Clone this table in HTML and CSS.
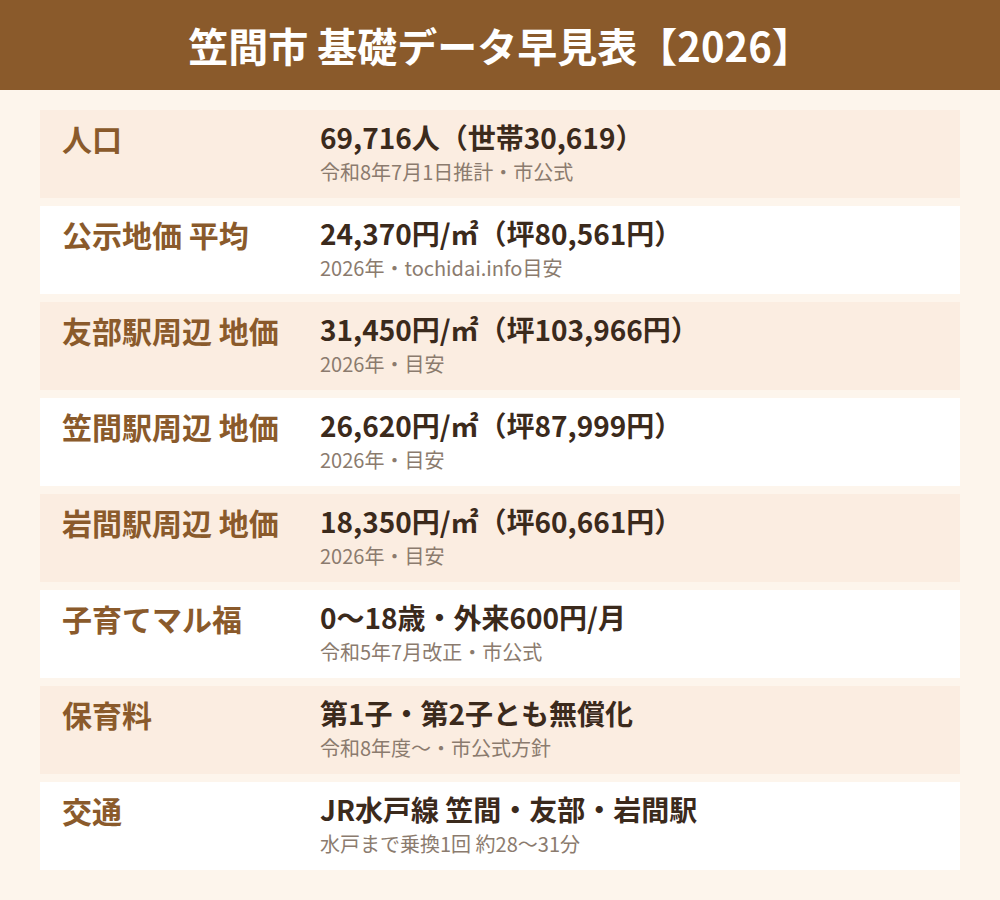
FILE: index.html
```html
<!DOCTYPE html>
<html lang="ja">
<head>
<meta charset="utf-8">
<title>笠間市 基礎データ早見表【2026】</title>
<link rel="stylesheet" href="styles.css">
</head>
<body>
<header class="header"><h1 class="title">笠間市 基礎データ早見表【2026】</h1></header>
<main class="list">
  <div class="row alt"><div class="label">人口</div><div class="data"><div class="value">69,716人（世帯30,619）</div><div class="sub">令和8年7月1日推計・市公式</div></div></div>
  <div class="row"><div class="label">公示地価 平均</div><div class="data"><div class="value">24,370円/㎡（坪80,561円）</div><div class="sub">2026年・tochidai.info目安</div></div></div>
  <div class="row alt"><div class="label">友部駅周辺 地価</div><div class="data"><div class="value">31,450円/㎡（坪103,966円）</div><div class="sub">2026年・目安</div></div></div>
  <div class="row"><div class="label">笠間駅周辺 地価</div><div class="data"><div class="value">26,620円/㎡（坪87,999円）</div><div class="sub">2026年・目安</div></div></div>
  <div class="row alt"><div class="label">岩間駅周辺 地価</div><div class="data"><div class="value">18,350円/㎡（坪60,661円）</div><div class="sub">2026年・目安</div></div></div>
  <div class="row"><div class="label">子育てマル福</div><div class="data"><div class="value">0〜18歳・外来600円/月</div><div class="sub">令和5年7月改正・市公式</div></div></div>
  <div class="row alt"><div class="label">保育料</div><div class="data"><div class="value">第1子・第2子とも無償化</div><div class="sub">令和8年度〜・市公式方針</div></div></div>
  <div class="row"><div class="label">交通</div><div class="data"><div class="value">JR水戸線 笠間・友部・岩間駅</div><div class="sub">水戸まで乗換1回 約28〜31分</div></div></div>
</main>
</body>
</html>
```
FILE: styles.css
```css
* { box-sizing: border-box; }
html, body { margin: 0; padding: 0; }
body {
  width: 1000px;
  height: 900px;
  background: #fdf5ec;
  font-family: "Noto Sans CJK JP", "Noto Sans", sans-serif;
  overflow: hidden;
}
.header {
  height: 90px;
  background: #8a5a2b;
  display: flex;
  align-items: center;
  justify-content: center;
}
.title {
  margin: 0;
  color: #ffffff;
  font-size: 40px;
  font-weight: 700;
  line-height: 1;
}
.list {
  padding: 20px 40px 0;
  display: flex;
  flex-direction: column;
  gap: 8px;
}
.row {
  height: 88px;
  background: #ffffff;
  display: grid;
  grid-template-columns: 258px 1fr;
  padding: 11px 22px 0;
}
.row.alt { background: #fbede1; }
.label {
  color: #8a5a2b;
  font-size: 30px;
  font-weight: 700;
  line-height: 32px;
  padding-top: 1px;
}
.value {
  color: #3b2a1c;
  font-size: 28px;
  font-weight: 700;
  line-height: 32px;
}
.sub {
  color: #8b7b6e;
  font-size: 20px;
  line-height: 26px;
  margin-top: 6px;
}
```
